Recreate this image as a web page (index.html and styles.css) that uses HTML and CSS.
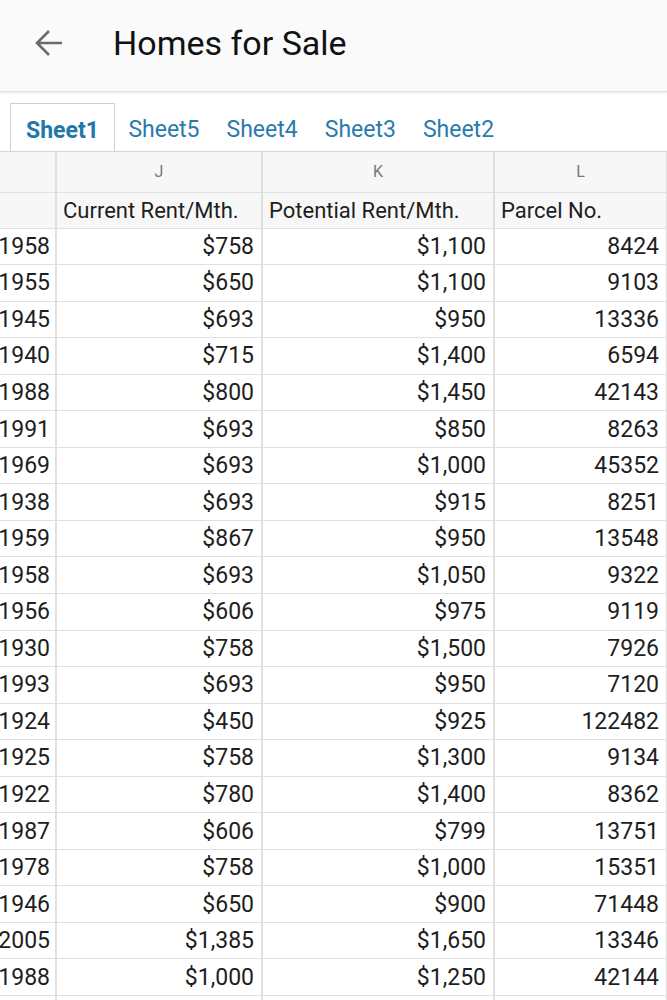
FILE: index.html
```html
<!DOCTYPE html>
<html lang="en">
<head>
    <meta charset="UTF-8">
    <meta name="viewport" content="width=device-width, initial-scale=1.0">
    <title>Homes for Sale</title>
    <link rel="stylesheet" href="styles.css">
</head>
<body>
    <div class="toolbar">
        <svg class="back" width="30" height="30" viewBox="0 0 30 30">
            <path d="M28 15H3M15 3L3 15l12 12" fill="none" stroke="#6b6b6b" stroke-width="2.6"/>
        </svg>
        <h1>Homes for Sale</h1>
    </div>

    <div class="tabs">
        <span class="tab active">Sheet1</span>
        <span class="tab">Sheet5</span>
        <span class="tab">Sheet4</span>
        <span class="tab">Sheet3</span>
        <span class="tab">Sheet2</span>
    </div>

    <table class="sheet">
        <colgroup>
            <col class="c-i">
            <col class="c-j">
            <col class="c-k">
            <col class="c-l">
        </colgroup>
        <tr class="letters">
            <td></td><td>J</td><td>K</td><td>L</td>
        </tr>
        <tr class="names">
            <td></td><td>Current Rent/Mth.</td><td>Potential Rent/Mth.</td><td>Parcel No.</td>
        </tr>
        <tr><td>1958</td><td>$758</td><td>$1,100</td><td>8424</td></tr>
        <tr><td>1955</td><td>$650</td><td>$1,100</td><td>9103</td></tr>
        <tr><td>1945</td><td>$693</td><td>$950</td><td>13336</td></tr>
        <tr><td>1940</td><td>$715</td><td>$1,400</td><td>6594</td></tr>
        <tr><td>1988</td><td>$800</td><td>$1,450</td><td>42143</td></tr>
        <tr><td>1991</td><td>$693</td><td>$850</td><td>8263</td></tr>
        <tr><td>1969</td><td>$693</td><td>$1,000</td><td>45352</td></tr>
        <tr><td>1938</td><td>$693</td><td>$915</td><td>8251</td></tr>
        <tr><td>1959</td><td>$867</td><td>$950</td><td>13548</td></tr>
        <tr><td>1958</td><td>$693</td><td>$1,050</td><td>9322</td></tr>
        <tr><td>1956</td><td>$606</td><td>$975</td><td>9119</td></tr>
        <tr><td>1930</td><td>$758</td><td>$1,500</td><td>7926</td></tr>
        <tr><td>1993</td><td>$693</td><td>$950</td><td>7120</td></tr>
        <tr><td>1924</td><td>$450</td><td>$925</td><td>122482</td></tr>
        <tr><td>1925</td><td>$758</td><td>$1,300</td><td>9134</td></tr>
        <tr><td>1922</td><td>$780</td><td>$1,400</td><td>8362</td></tr>
        <tr><td>1987</td><td>$606</td><td>$799</td><td>13751</td></tr>
        <tr><td>1978</td><td>$758</td><td>$1,000</td><td>15351</td></tr>
        <tr><td>1946</td><td>$650</td><td>$900</td><td>71448</td></tr>
        <tr><td>2005</td><td>$1,385</td><td>$1,650</td><td>13346</td></tr>
        <tr><td>1988</td><td>$1,000</td><td>$1,250</td><td>42144</td></tr>
        <tr><td></td><td></td><td></td><td></td></tr>
    </table>
</body>
</html>
```

FILE: styles.css
```css
body {
    margin: 0;
    font-family: Roboto, "Liberation Sans", sans-serif;
    background: #fff;
    color: #222;
    overflow: hidden;
}

.toolbar {
    height: 92px;
    display: flex;
    align-items: center;
    padding-bottom: 6px;
    box-sizing: border-box;
    background-color: #fafafa;
    border-bottom: 1px solid #e2e2e2;
    box-shadow: 0 1px 3px rgba(0, 0, 0, 0.1);
}

.back {
    margin-left: 34px;
    margin-right: 49px;
}

.toolbar h1 {
    margin: 0;
    font-size: 34px;
    font-weight: 400;
    color: #111;
}

.tabs {
    height: 60px;
    display: flex;
    align-items: flex-end;
    padding-left: 10px;
    border-bottom: 1px solid #d6d6d6;
    box-sizing: border-box;
}

.tab {
    height: 48px;
    padding: 4px 13.5px 0;
    line-height: 46px;
    font-size: 23px;
    color: #2a7bab;
    box-sizing: border-box;
}

.tab.active {
    font-weight: 700;
    padding: 4px 15px 0;
    border: 1px solid #cfcfcf;
    border-bottom: none;
    color: #2277a6;
}

.sheet {
    border-collapse: collapse;
    table-layout: fixed;
    width: 667px;
    font-size: 23px;
}

.c-i { width: 56px; }
.c-j { width: 206px; }
.c-k { width: 232px; }
.c-l { width: 173px; }

.sheet td {
    height: 36.55px;
    padding: 0 7px 0 0;
    border: 2px solid #e0e0e0;
    border-top-width: 1px;
    border-bottom-width: 1px;
    text-align: right;
    white-space: nowrap;
    overflow: hidden;
    box-sizing: border-box;
    color: #1e1e1e;
}

.sheet td:first-child {
    border-left: none;
    padding-right: 5px;
    text-overflow: clip;
    direction: rtl;
}

.sheet tr:first-child td {
    border-top: none;
}

.letters td {
    height: 40px;
    background-color: #f7f7f7;
    font-size: 16px;
    text-align: center;
    color: #777;
    padding: 0;
}

.names td {
    height: 36px;
    background-color: #f7f7f7;
    text-align: left;
    padding: 0 0 0 6px;
    font-size: 22px;
}
```
